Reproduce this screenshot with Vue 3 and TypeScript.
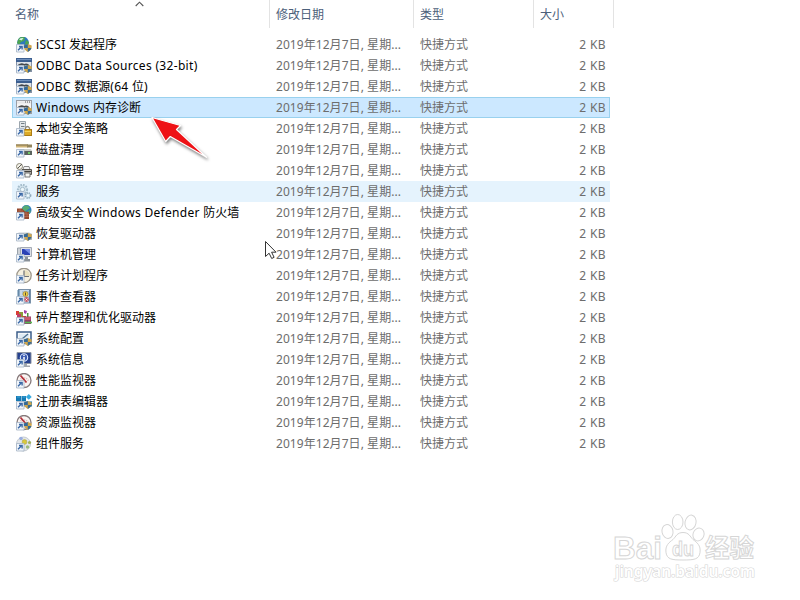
<script setup lang="ts">
type IconName =
  | 'iscsi' | 'odbc' | 'memory' | 'policy' | 'cleanup' | 'printer' | 'services' | 'firewall'
  | 'recovery' | 'computer' | 'clock' | 'events' | 'defrag' | 'config' | 'info' | 'gauge'
  | 'registry' | 'resource' | 'component'

interface FileRow {
  name: string
  icon: IconName
  shield?: boolean
  state?: 'selected' | 'hovered'
}

const date = '2019年12月7日, 星期...'
const kind = '快捷方式'
const size = '2 KB'

const rows: FileRow[] = [
  { name: 'iSCSI 发起程序', icon: 'iscsi', shield: true },
  { name: 'ODBC Data Sources (32-bit)', icon: 'odbc', shield: true },
  { name: 'ODBC 数据源(64 位)', icon: 'odbc', shield: true },
  { name: 'Windows 内存诊断', icon: 'memory', shield: true, state: 'selected' },
  { name: '本地安全策略', icon: 'policy' },
  { name: '磁盘清理', icon: 'cleanup' },
  { name: '打印管理', icon: 'printer' },
  { name: '服务', icon: 'services', state: 'hovered' },
  { name: '高级安全 Windows Defender 防火墙', icon: 'firewall' },
  { name: '恢复驱动器', icon: 'recovery', shield: true },
  { name: '计算机管理', icon: 'computer' },
  { name: '任务计划程序', icon: 'clock' },
  { name: '事件查看器', icon: 'events' },
  { name: '碎片整理和优化驱动器', icon: 'defrag' },
  { name: '系统配置', icon: 'config', shield: true },
  { name: '系统信息', icon: 'info' },
  { name: '性能监视器', icon: 'gauge' },
  { name: '注册表编辑器', icon: 'registry', shield: true },
  { name: '资源监视器', icon: 'resource', shield: true },
  { name: '组件服务', icon: 'component' },
]

// Splits a label into Latin and CJK runs, so that only Latin runs are letter-spaced.
function runs(text: string): { text: string; latin: boolean }[] {
  return (text.match(/[\x20-\x7e]+|[^\x20-\x7e]+/g) ?? []).map((part) => ({
    text: part,
    latin: /^[\x20-\x7e]/.test(part),
  }))
}
</script>

<template>
  <main class="explorer">
    <header class="head">
      <div class="th th-name">
        名称
        <svg class="sort" width="9" height="6" viewBox="0 0 9 6"><path d="M.7 5 4.5 1.2 8.3 5" fill="none" stroke="#555" stroke-width="1.1" /></svg>
      </div>
      <div class="th th-date">修改日期</div>
      <div class="th th-kind">类型</div>
      <div class="th th-size">大小</div>
    </header>

    <section class="list">
      <div v-for="row in rows" :key="row.name" class="row" :class="row.state">
        <svg class="icon" width="16" height="16" viewBox="0 0 16 16">
          <g v-if="row.icon === 'iscsi'">
            <circle cx="7" cy="5.500" r="5.800" fill="#2d78bd" />
            <path d="M2 3C4-1 8 0 9 1L8 4 5 5 3 8 1 6ZM10 3l3 2-1 5-3-3Z" fill="#4da552" />
            <path d="M3 2.500Q5 .5 7.500 1.200L5.500 3.500Z" fill="#d5f1df" />
            <path d="M10 8h4v4h-4Z" fill="#b8c0c8" />
          </g>
          <g v-else-if="row.icon === 'odbc'">
            <rect x=".5" y=".5" width="15" height="13" fill="#dfe4ea" stroke="#8492a8" />
            <path d="M0 0h16v4H0Z" fill="#3c5f90" />
            <path d="M1 1.500h14" stroke="#6d8fbd" />
            <path d="M2.500 7.500q3-2.500 5.500-.5 3-1.500 5 1" fill="none" stroke="#42484f" stroke-width="1.800" />
          </g>
          <g v-else-if="row.icon === 'memory'">
            <rect x=".5" y=".5" width="15" height="13" fill="#f5f5f5" stroke="#9a9fa6" />
            <path d="M1 2.500h14" stroke="#e6e7e9" stroke-width="2" />
            <path d="M9 2h1m1 0h1m1 0h1" stroke="#555" />
            <path d="M2.500 7.500q3-2.500 5.500-.5 3-1.500 5 1" fill="none" stroke="#4c4c4c" stroke-width="1.800" />
          </g>
          <g v-else-if="row.icon === 'policy'">
            <path d="M3.500.5h6v14h-6Z" fill="#e3e7ea" stroke="#9ba5ad" />
            <path d="M5 2.500h3.500M5 5.500h3.500" stroke="#737d85" />
            <path d="M9.500 9V7q2-3 4 0v2" fill="none" stroke="#8d887b" stroke-width="1.300" />
            <rect x="8" y="8.500" width="7.500" height="6" fill="#dba928" stroke="#ad7c13" />
            <path d="M8.500 10.500h6.500" stroke="#f7d55c" />
          </g>
          <g v-else-if="row.icon === 'cleanup'">
            <path d="M0 2.500h12v3H0Z" fill="#d0b578" />
            <path d="M0 3h12" stroke="#897a52" stroke-width="1.200" />
            <path d="M11 2.500h5v3h-5Z" fill="#93855c" />
            <path d="M4 7h11l1 2H4Z" fill="#cbcfca" />
            <path d="M4 9h12v4H4Z" fill="#5a635e" />
            <path d="M12 11h2" stroke="#79ed69" stroke-width="1.500" />
          </g>
          <g v-else-if="row.icon === 'printer'">
            <path d="M8 3.500h5l1 3H7Z" fill="#f2f2f2" stroke="#8c8c8c" />
            <path d="M6 6.500h9.500v5H6Z" fill="#b3b0aa" stroke="#57534d" />
            <path d="M9 10h5v4H9Z" fill="#f6f6f2" stroke="#777" />
            <circle cx="3.500" cy="3.500" r="3" fill="#f5f3ea" stroke="#8b8676" />
            <path d="M1.500 5.500 6 1" stroke="#5e5d58" /><path d="M7 8.500h8" stroke="#42413e" />
          </g>
          <g v-else-if="row.icon === 'services'">
            <circle cx="6.500" cy="5.500" r="4.600" fill="#d5e5ef" stroke="#a5bdcc" stroke-width="2" stroke-dasharray="1.700 1" />
            <circle cx="6.500" cy="5.500" r="2.200" fill="#eef8fc" stroke="#a5bdcc" />
            <circle cx="12" cy="11.500" r="2.600" fill="#d2e5f0" stroke="#8fa9ba" stroke-width="1.600" stroke-dasharray="1.300 .8" />
            <circle cx="12" cy="11.500" r="1" fill="#f5fbfd" />
          </g>
          <g v-else-if="row.icon === 'firewall'">
            <circle cx="10.500" cy="5" r="5" fill="#2f7fbe" />
            <path d="M7 2q4-4 7 1l-3 2-2 2-3-3ZM13 5l2 1-2 3-2-2Z" fill="#55ac74" />
            <path d="M1 3.500h5l3 3 4 .5v7H8L1 9Z" fill="#94492f" />
            <path d="M2 6h5M8 9h5M8 11.500h5M4 4v2m6 1v2m1 0v2.500" stroke="#bd7357" stroke-width=".7" />
          </g>
          <g v-else-if="row.icon === 'recovery'">
            <path d="M1 8 3 6h10l2.500 2Z" fill="#e3e7ea" />
            <path d="M.5 8h15v5.500H.5Z" fill="#bcc3c9" stroke="#a5acb3" />
          </g>
          <g v-else-if="row.icon === 'computer'">
            <path d="M1.500 1h3v12h-3Z" fill="#cfd3d8" stroke="#9aa2aa" />
            <path d="M4.500.5h11v9h-11Z" fill="#dde0e6" stroke="#a5abb5" />
            <path d="M6 2h8v6H6Z" fill="#2a41b5" /><path d="M8 2h6v5Z" fill="#748be6" />
            <path d="M9 10h3v2h2v2.500H8V12h1Z" fill="#8a9299" />
          </g>
          <g v-else-if="row.icon === 'clock'">
            <circle cx="8" cy="7.500" r="7.200" fill="#f5f0e0" stroke="#9c968a" stroke-width="1.300" />
            <path d="M8 8V2A6 6 0 0 1 14 8Z" fill="#e8dfbd" />
            <path d="M8 2.500V8.500h5" fill="none" stroke="#6d7178" stroke-width="1.200" />
          </g>
          <g v-else-if="row.icon === 'events'">
            <rect x="2.500" y=".5" width="12" height="13.500" fill="#c9d8e8" stroke="#7890a8" />
            <path d="M1 2h3M1 4h3M1 6h3" stroke="#5580a5" />
            <path d="M6 3h7M6 5h7M6 8h7M6 11h7" stroke="#94aec4" />
            <path d="M13.500 1v13" stroke="#5e7faa" />
            <circle cx="9.500" cy="5" r="2.500" fill="#efcd48" stroke="#9c832e" stroke-width=".6" />
            <path d="M9.500 3.500v3" stroke="#55512e" />
            <circle cx="10.500" cy="10.500" r="2.400" fill="#c85462" /><path d="m9.500 9.500 2 2m0-2-2 2" stroke="#fff" stroke-width=".8" />
          </g>
          <g v-else-if="row.icon === 'defrag'">
            <path d="M0 1h3v4H0Z" fill="#d93c34" /><path d="M3 2h4v5H3Z" fill="#8a9b3b" />
            <path d="m8 0 3 1-1 3-2-1Z" fill="#a545aa" />
            <path d="M1 4h4v4H1Z" fill="#be3d67" /><path d="M6 6h4v8H6Z" fill="#ba5b31" />
            <path d="M11 3h1.500v4H11Z" fill="#48963c" />
            <path d="M8 6.500h7V14H8Z" fill="#8d3d6c" />
            <path d="M8.500 7h6v3h-6Z" fill="#c9596a" /><path d="M9 12.500h7" stroke="#55b84f" stroke-width="1.700" />
          </g>
          <g v-else-if="row.icon === 'config'">
            <path d="M1 1h14v11.500H1Z" fill="#f3f7fa" stroke="#3d5f8a" stroke-width="1.500" />
            <path d="M3 3h10v7H3Z" fill="#dfebf4" /><path d="m6 8 6-5" fill="none" stroke="#4d7192" stroke-width="1.400" />
            <path d="M3 8.500h9" stroke="#8ab2d2" />
          </g>
          <g v-else-if="row.icon === 'info'">
            <path d="M1 .5h14v11H1Z" fill="#26418f" stroke="#8b93a1" />
            <circle cx="8" cy="5.500" r="3.700" fill="#3b5bb0" stroke="#dce8ff" stroke-width="1.100" />
            <path d="M8 5v3.500" stroke="#fff" stroke-width="1.500" /><circle cx="8" cy="3.500" r=".8" fill="#fff" />
            <path d="M8 12h3v1.500h3V15H8Z" fill="#a1a6ad" />
          </g>
          <g v-else-if="row.icon === 'gauge' || row.icon === 'resource'">
            <circle cx="8" cy="7.500" r="7" fill="#fbf5f3" stroke="#85797a" stroke-width="1.300" />
            <path d="M3.500 8a4.800 4.800 0 0 1 9 0" fill="none" stroke="#d3b9b6" stroke-width="1.500" stroke-dasharray="1 1" />
            <path d="M4.500 2.500 10.500 9.500" stroke="#b5303a" stroke-width="1.800" />
          </g>
          <g v-else-if="row.icon === 'registry'">
            <path d="M0 2h5v5H0ZM5.500 2h4.500v5H5.500ZM5.500 7.500h5v5h-5ZM11 7.500h5v5h-5Z" fill="#1579b4" />
            <path d="m12.800 0 2.900 2.900-2.900 2.900-2.900-2.900Z" fill="#37aadf" />
            <path d="M1 3h3M6.500 3h3M6.500 8.500h3" stroke="#42a9d8" />
          </g>
          <g v-else>
            <circle cx="7.500" cy="8" r="7" fill="#e2e6ea" stroke="#c6ccd2" />
            <circle cx="5" cy="2.500" r="1.800" fill="#9aaede" />
            <circle cx="8.500" cy="6" r="2.400" fill="#d9c83c" stroke="#a5a045" stroke-width=".5" />
            <circle cx="13.500" cy="6.500" r="1.600" fill="#a2b35a" /><circle cx="11.500" cy="11" r="1.700" fill="#9dbb7c" />
          </g>

          <path d="M.5 7.500h7.500V15H.5Z" fill="#f1f5fa" stroke="#a3b2c4" stroke-width=".8" />
          <path d="M2 13.300 5 10.300M3 9.500h3.100v3.100" fill="none" stroke="#3a68a6" stroke-width="1.400" />
          <g v-if="row.shield">
            <path d="m11.800 7 3.900 1.500q.3 4.500-3.900 6.500-4.200-2-3.900-6.500Z" fill="#cfa64c" />
            <path d="M11.800 7v4H8.100Q7.800 10 7.900 8.500ZM11.800 11h3.700q-.8 2.700-3.700 4Z" fill="#356a99" />
          </g>
        </svg>
        <span class="name"><span v-for="(run, i) in runs(row.name)" :key="i" :class="{ latin: run.latin }">{{ run.text }}</span></span>
        <span class="date">{{ date }}</span>
        <span class="kind">{{ kind }}</span>
        <span class="size">{{ size }}</span>
      </div>
    </section>

    <svg class="pointer-arrow" width="66" height="54" viewBox="148 112 66 54">
      <path d="M152 117.500 180.500 125.500 176.500 129.500 206.500 157.300 170.300 136.500 165.700 141.500Z" fill="#ee1216" stroke="#fff" stroke-width="1.200" stroke-linejoin="round" />
    </svg>

    <svg class="cursor" width="14" height="21" viewBox="0 0 14 21">
      <path d="M1.500 1.500v15l3.600-3.300 2.600 5.300 2.400-1.200-2.500-5.100H12Z" fill="#fff" stroke="#333" />
    </svg>

    <svg class="watermark" width="160" height="80" viewBox="605 508 160 80">
      <g class="outline">
        <text class="brand" x="613" y="558.500" font-size="32" textLength="49" lengthAdjust="spacingAndGlyphs">Bai</text>
        <ellipse cx="667.500" cy="531.500" rx="5.500" ry="7" transform="rotate(-12 667.500 531.500)" />
        <ellipse cx="677.700" cy="522" rx="5.300" ry="7.500" />
        <ellipse cx="690.500" cy="522.500" rx="5.500" ry="7.500" transform="rotate(12 690.500 522.500)" />
        <ellipse cx="698.500" cy="534.500" rx="5.500" ry="6.500" transform="rotate(20 698.500 534.500)" />
        <path d="M683 532.500c-6 0-7 4-10 7-4 3-8 6-7 13 1 7 6 7.500 17 7.500s16-.5 17-7.500c1-7-3-10-7-13-3-3-4-7-10-7Z" />
        <text class="brand" x="672" y="555.500" font-size="21" textLength="22" lengthAdjust="spacingAndGlyphs">du</text>
        <text class="brand" x="705" y="557" font-size="25" textLength="49" lengthAdjust="spacingAndGlyphs">经验</text>
        <text class="site" x="615" y="577" font-size="16" textLength="140" lengthAdjust="spacingAndGlyphs">jingyan.baidu.com</text>
      </g>
    </svg>
  </main>
</template>

<style>
body {
  margin: 0;
  background: #fff;
}
</style>

<style scoped>
.explorer {
  position: relative;
  width: 800px;
  height: 600px;
  overflow: hidden;
  background: #fff;
  font: 12px/21px "Noto Sans", "Noto Sans CJK SC", sans-serif;
  color: #000;
}
.head {
  display: grid;
  grid-template-columns: 270px 144px 120px 80px;
  height: 28px;
  color: #4c607a;
}
.th {
  box-sizing: border-box;
  height: 28px;
  border-right: 1px solid #e3e3e3;
  padding-left: 6px;
  line-height: 29px;
}
.th-name {
  position: relative;
  padding-left: 15px;
}
.sort {
  position: absolute;
  left: 135px;
  top: 1px;
}
.list {
  width: 598px;
  margin: 6px 0 0 12px;
}
.row {
  display: grid;
  grid-template-columns: 16px 236px 144px 120px 74px;
  box-sizing: border-box;
  height: 21px;
  padding-left: 4px;
  white-space: nowrap;
}
.selected {
  background: #cce8ff;
  box-shadow: inset 0 0 0 1px #99d1ee;
}
.hovered {
  background: #e5f3fd;
}
.icon {
  display: block;
  margin-top: 3px;
}
.name {
  padding-left: 4px;
}
.latin {
  letter-spacing: 0.32px;
  white-space: pre;
}
.date,
.kind,
.size {
  color: #6d6d6d;
}
.date {
  padding-left: 8px;
  letter-spacing: 0.06px;
}
.kind {
  padding-left: 8px;
}
.size {
  text-align: right;
  letter-spacing: 0.4px;
}
.pointer-arrow {
  position: absolute;
  left: 148px;
  top: 112px;
  filter: drop-shadow(1px 2px 1.5px rgba(0, 0, 0, 0.5));
}
.cursor {
  position: absolute;
  left: 264px;
  top: 240px;
}
.watermark {
  position: absolute;
  left: 605px;
  top: 508px;
}
.outline {
  fill: #fff;
  stroke: #d6d6d6;
  stroke-width: 1;
}
.brand {
  font-family: "Liberation Sans", "Noto Sans CJK SC", sans-serif;
  font-weight: 700;
}
.site {
  font-family: "Noto Sans", sans-serif;
  font-weight: 600;
  stroke: #d6d6d6;
  stroke-width: 1.2;
  paint-order: stroke;
}
</style>
